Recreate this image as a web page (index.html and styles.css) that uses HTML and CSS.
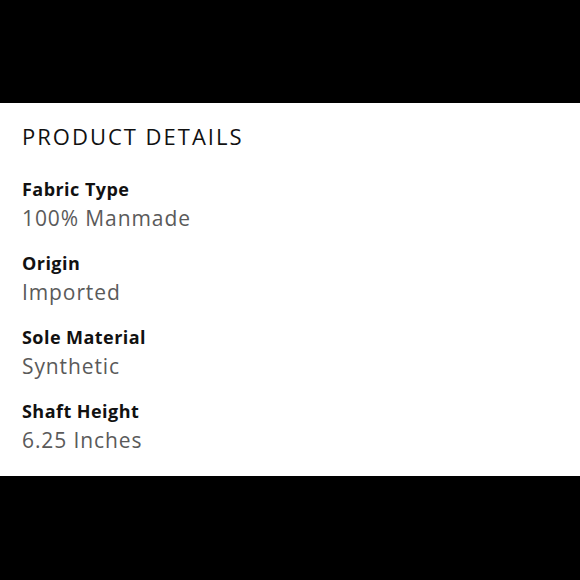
FILE: index.html
```html
<!DOCTYPE html>
<html lang="en">
<head>
<meta charset="utf-8">
<link rel="stylesheet" href="styles.css">
</head>
<body>
<div class="band"></div>
<section class="panel">
  <h2 class="title">PRODUCT DETAILS</h2>
  <dl class="details">
    <div class="row"><dt class="label">Fabric Type</dt><dd class="value">100% Manmade</dd></div>
    <div class="row"><dt class="label">Origin</dt><dd class="value">Imported</dd></div>
    <div class="row"><dt class="label">Sole Material</dt><dd class="value">Synthetic</dd></div>
    <div class="row"><dt class="label">Shaft Height</dt><dd class="value">6.25 Inches</dd></div>
  </dl>
</section>
</body>
</html>
```
FILE: styles.css
```css
html, body {
  margin: 0;
  padding: 0;
  background: #000;
  height: 100%;
}
body {
  font-family: "Open Sans", "Noto Sans", sans-serif;
}
.band {
  height: 103px;
}
.panel {
  background: #fff;
  height: 373px;
  box-sizing: border-box;
  padding: 18px 22px 0;
}
.title {
  margin: 0;
  font-size: 22px;
  line-height: 30px;
  font-weight: 400;
  letter-spacing: 2px;
  color: #111;
}
.details {
  margin: 26px 0 0;
  display: flex;
  flex-direction: column;
  gap: 19px;
}
.row {
  display: flex;
  flex-direction: column;
}
.label {
  font-size: 18px;
  line-height: 24px;
  font-weight: 700;
  letter-spacing: 0.45px;
  color: #111;
}
.value {
  margin: 3px 0 0;
  font-size: 21px;
  line-height: 28px;
  letter-spacing: 0.9px;
  color: #5a5a5a;
}
```
